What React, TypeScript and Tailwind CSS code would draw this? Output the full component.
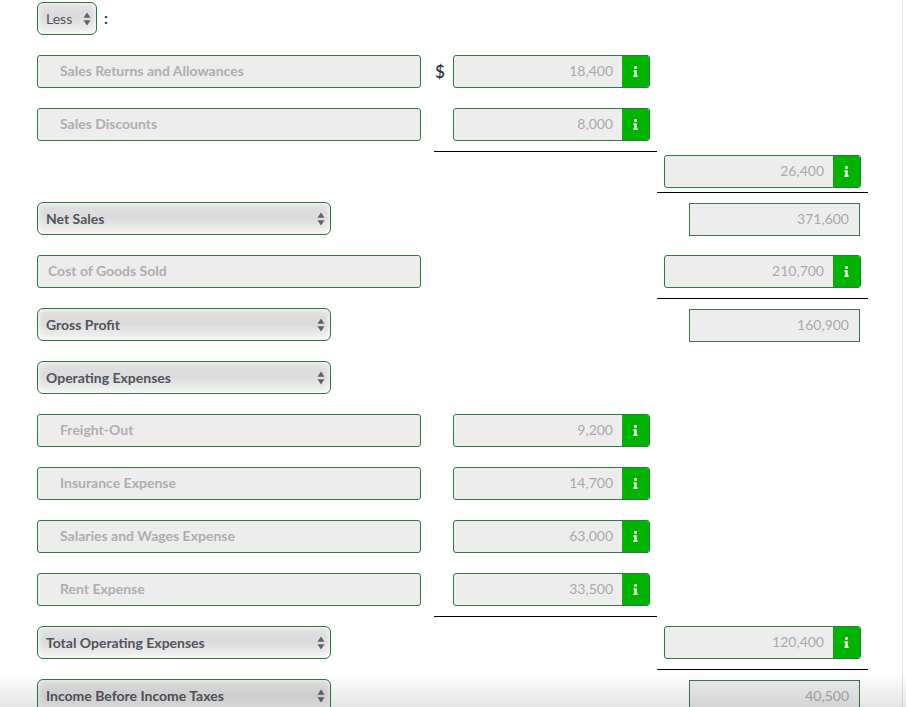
import React from 'react';
import { FaInfo } from 'react-icons/fa';

const Arrows = () => (
  <svg width="8" height="14" viewBox="0 0 8 14" className="shrink-0">
    <path d="M4 0.5 L7.5 5.8 L0.5 5.8 Z" fill="#5c616b" />
    <path d="M4 13.5 L7.5 8.2 L0.5 8.2 Z" fill="#5c616b" />
  </svg>
);

const Select = ({ label, className = 'w-[294px]' }: { label: string; className?: string }) => (
  <div
    className={`flex h-[33px] items-center justify-between rounded-[6px] border border-[#2a7d42] bg-[linear-gradient(#dfdfdf_0%,#dcdcdc_50%,#e6e6e6_70%,#f2f2f2_100%)] pl-2 pr-[5px] text-[14px] font-bold text-[#50545c] shadow-[inset_0_0_6px_rgba(255,255,255,0.95)] ${className}`}
  >
    <span>{label}</span>
    <Arrows />
  </div>
);

const Label = ({ label, indent }: { label: string; indent?: boolean }) => (
  <div
    className={`flex h-[33px] w-[384px] items-center rounded-[3px] border border-[#2a7d42] bg-[#ededed] pb-[2px] text-[14px] font-bold text-[#aeaeae] ${indent ? 'pl-[22px]' : 'pl-[10px]'}`}
  >
    {label}
  </div>
);

const Amount = ({ value }: { value: string }) => (
  <div className="flex h-[33px] w-[197px] overflow-hidden rounded-[3px] border border-[#2a7d42] bg-[#ededed] text-[14px] text-[#a9a9a9]">
    <div className="flex flex-1 items-center justify-end pb-[2px] pr-[9px]">{value}</div>
    <div className="flex w-[27px] items-center justify-center bg-[#00b400] text-white">
      <FaInfo size={11} />
    </div>
  </div>
);

const Total = ({ value }: { value: string }) => (
  <div className="ml-[25px] mt-[1px] flex h-[33px] w-[171px] items-center justify-end border border-[#39764c] bg-[#ededed] pb-[2px] pr-[10px] text-[14px] text-[#a9a9a9]">
    {value}
  </div>
);

// middle column: $ sign + amount, optional rule underneath
const Mid = ({ value, dollar, rule }: { value?: string; dollar?: boolean; rule?: boolean }) => (
  <div className={`ml-[13px] w-[223px] shrink-0 ${rule ? 'border-b border-black pb-[10px]' : ''}`}>
    {value && (
      <div className="flex items-center">
        <span className="w-[19px] pb-[1px] pl-[1px] text-[17px] font-semibold leading-none text-[#2e3a4a]">{dollar ? '$' : ''}</span>
        <Amount value={value} />
      </div>
    )}
  </div>
);

const Right = ({ children, rule, tight }: { children: React.ReactNode; rule?: boolean; tight?: boolean }) => (
  <div className={`w-[211px] shrink-0 ${rule ? `border-b border-black ${tight ? 'pb-[4px]' : 'pb-[10px]'}` : ''}`}>
    <div className="pl-[7px]">{children}</div>
  </div>
);

const Row = ({ children, className = 'mb-[20px]' }: { children: React.ReactNode; className?: string }) => (
  <div className={`flex items-start ${className}`}>{children}</div>
);

const Gap = () => <div className="ml-[103px] w-[223px] shrink-0" />;

export default function App() {
  return (
    <div className="relative h-[707px] w-[906px] overflow-hidden bg-white font-['Lato',sans-serif]">
      <div className="h-[707px] w-[903px] border-r border-[#e4e4e4] pl-[37px] pt-[2px]">
        <Row>
          <Select label="Less" className="w-[60px] !font-normal" />
          <span className="ml-[7px] mt-[5px] text-[15px] font-bold text-[#2e3a4a]">:</span>
        </Row>
        <Row>
          <Label label="Sales Returns and Allowances" indent />
          <Mid value="18,400" dollar />
        </Row>
        <Row className="mb-[3px]">
          <Label label="Sales Discounts" indent />
          <Mid value="8,000" rule />
        </Row>
        <Row className="mb-[9px]">
          <div className="w-[384px] shrink-0" />
          <Mid />
          <Right rule tight><Amount value="26,400" /></Right>
        </Row>
        <Row className="mb-[19px]">
          <Select label="Net Sales" />
          <Gap />
          <Right><Total value="371,600" /></Right>
        </Row>
        <Row className="mb-[9px]">
          <Label label="Cost of Goods Sold" />
          <Mid />
          <Right rule><Amount value="210,700" /></Right>
        </Row>
        <Row className="mb-[19px]">
          <Select label="Gross Profit" />
          <Gap />
          <Right><Total value="160,900" /></Right>
        </Row>
        <Row>
          <Select label="Operating Expenses" />
        </Row>
        <Row>
          <Label label="Freight-Out" indent />
          <Mid value="9,200" />
        </Row>
        <Row>
          <Label label="Insurance Expense" indent />
          <Mid value="14,700" />
        </Row>
        <Row>
          <Label label="Salaries and Wages Expense" indent />
          <Mid value="63,000" />
        </Row>
        <Row className="mb-[9px]">
          <Label label="Rent Expense" indent />
          <Mid value="33,500" rule />
        </Row>
        <Row className="mb-[9px]">
          <Select label="Total Operating Expenses" />
          <Gap />
          <Right rule><Amount value="120,400" /></Right>
        </Row>
        <Row>
          <Select label="Income Before Income Taxes" />
          <Gap />
          <Right><Total value="40,500" /></Right>
        </Row>
      </div>
      <div className="pointer-events-none absolute inset-x-0 bottom-0 h-[35px] bg-[linear-gradient(rgba(0,0,0,0),rgba(0,0,0,0.1))]" />
    </div>
  );
}
